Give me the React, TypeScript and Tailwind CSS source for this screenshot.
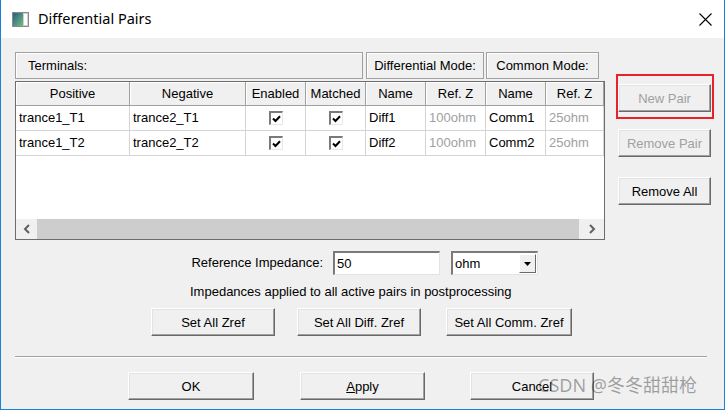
import React from "react";

const font = { fontFamily: '"Liberation Sans", Arial, sans-serif' };

const btnCls =
  "flex items-center justify-center bg-[#f0f0f0] border border-t-white border-l-white border-r-[#696969] border-b-[#696969] shadow-[inset_-1px_-1px_0_#a0a0a0,inset_1px_1px_0_#e3e3e3] text-[13px] leading-none";

const cols = [
  { key: "pos", label: "Positive", w: "w-[114px]" },
  { key: "neg", label: "Negative", w: "w-[116px]" },
  { key: "en", label: "Enabled", w: "w-[60px]" },
  { key: "ma", label: "Matched", w: "w-[60px]" },
  { key: "dn", label: "Name", w: "w-[60px]" },
  { key: "dz", label: "Ref. Z", w: "w-[60px]" },
  { key: "cn", label: "Name", w: "w-[60px]" },
  { key: "cz", label: "Ref. Z", w: "w-[58px]" },
];

const rows = [
  { pos: "trance1_T1", neg: "trance2_T1", dn: "Diff1", dz: "100ohm", cn: "Comm1", cz: "25ohm" },
  { pos: "trance1_T2", neg: "trance2_T2", dn: "Diff2", dz: "100ohm", cn: "Comm2", cz: "25ohm" },
];

const CheckBox = () => (
  <div className="w-[14px] h-[14px] bg-white border-t-2 border-l-2 border-[#7a7a7a] border-r border-b border-r-[#e8e8e8] border-b-[#e8e8e8] flex items-center justify-center">
    <svg width="9" height="8" viewBox="0 0 9 8">
      <path d="M1 3.5 L3.5 6 L8 1.2" fill="none" stroke="#000" strokeWidth="2" />
    </svg>
  </div>
);

const Btn = ({ label, w, disabled, children }: { label?: string; w: string; disabled?: boolean; children?: React.ReactNode }) => (
  <div className={`${btnCls} ${w} h-[28px] ${disabled ? "text-[#a0a0a0]" : "text-black"}`}>
    {children ?? label}
  </div>
);

const Grid = () => (
  <div className="w-[590px] h-[159px] mt-[2px] border border-[#6d6d6d] bg-white flex flex-col overflow-hidden">
    <div className="flex h-[24px] bg-[#f0f0f0]">
      {cols.map((c) => (
        <div
          key={c.key}
          className={`${c.w} shrink-0 flex items-center justify-center border-r border-b border-[#a0a0a0] shadow-[inset_1px_1px_0_#fff] text-[13px]`}
        >
          {c.label}
        </div>
      ))}
    </div>
    {rows.map((r, i) => (
      <div key={i} className="flex h-[25px]">
        {cols.map((c) => {
          const isCheck = c.key === "en" || c.key === "ma";
          const gray = c.key === "dz" || c.key === "cz";
          return (
            <div
              key={c.key}
              className={`${c.w} shrink-0 flex items-center border-r border-b border-[#d4d4d4] text-[13px] ${
                isCheck ? "justify-center" : "pl-[3px]"
              } ${gray ? "text-[#a0a0a0]" : "text-black"}`}
            >
              {isCheck ? <CheckBox /> : (r as any)[c.key]}
            </div>
          );
        })}
      </div>
    ))}
    <div className="flex-1" />
    <div className="flex h-[20px]">
      <div className="w-[21px] bg-[#f0f0f0] flex items-center justify-center">
        <svg width="8" height="10" viewBox="0 0 8 10">
          <path d="M6 1 L2 5 L6 9" fill="none" stroke="#606060" strokeWidth="2" />
        </svg>
      </div>
      <div className="flex-1 bg-[#cdcdcd]" />
      <div className="w-[25px] bg-[#f0f0f0] flex items-center justify-center">
        <svg width="8" height="10" viewBox="0 0 8 10">
          <path d="M2 1 L6 5 L2 9" fill="none" stroke="#606060" strokeWidth="2" />
        </svg>
      </div>
    </div>
  </div>
);

const HeadBox = ({ w, label, pl }: { w: string; label: string; pl?: string }) => (
  <div
    className={`${w} h-[27px] flex items-center ${pl ?? "justify-center"} bg-[#f0f0f0] border border-[#a0a0a0] shadow-[inset_1px_1px_0_#fff] text-[13px]`}
  >
    {label}
  </div>
);

export default function App() {
  return (
    <div className="w-[725px] h-[410px] bg-white relative">
      <div
        className="w-full h-full flex flex-col border-l border-r border-b border-[#1883d7] text-black"
        style={font}
      >
        {/* title bar */}
        <div className="h-[38px] bg-white flex items-center shrink-0">
          <svg width="17" height="15" viewBox="0 0 17 15" className="ml-[11px] mt-[1px]">
            <defs>
              <linearGradient id="ic" x1="0" y1="0" x2="1" y2="1">
                <stop offset="0" stopColor="#2a5d86" />
                <stop offset="1" stopColor="#6fbf7d" />
              </linearGradient>
            </defs>
            <rect x="0.5" y="0.5" width="16" height="14" fill="#d0d0d0" stroke="#8a8a8a" />
            <rect x="1" y="1" width="10" height="13" fill="url(#ic)" />
            <rect x="12" y="2" width="3" height="11" fill="#fff" />
          </svg>
          <span
            className="ml-[9px] text-[14.5px] text-black"
            style={{ fontFamily: '"Noto Sans", "Open Sans", sans-serif' }}
          >
            Differential Pairs
          </span>
          <div className="flex-1" />
          <svg width="13" height="13" viewBox="0 0 13 13" className="mr-[12px]">
            <path d="M0.5 0.5 L12.5 12.5 M12.5 0.5 L0.5 12.5" stroke="#000" strokeWidth="1.1" />
          </svg>
        </div>

        {/* body */}
        <div className="flex-1 bg-[#f0f0f0] pl-[14px] pt-[14px] flex flex-col">
          <div className="flex">
            <div className="flex flex-col w-[590px]">
              <div className="flex">
                <HeadBox w="w-[348px]" label="Terminals:" pl="pl-[12px]" />
                <div className="w-[3px]" />
                <HeadBox w="w-[118px]" label="Differential Mode:" />
                <div className="w-[2px]" />
                <HeadBox w="w-[113px]" label="Common Mode:" />
              </div>
              <Grid />
            </div>
            <div className="flex flex-col ml-[13px] pt-[32px]">
              <div className="relative">
                <Btn label="New Pair" w="w-[93px]" disabled />
                <div className="absolute left-[-2px] top-[-10px] w-[98px] h-[45px] border-2 border-[#e8212b]" />
              </div>
              <div className="h-[17px]" />
              <Btn label="Remove Pair" w="w-[93px]" disabled />
              <div className="h-[20px]" />
              <Btn label="Remove All" w="w-[93px]" />
            </div>
          </div>

          {/* reference impedance */}
          <div className="flex items-center h-[24px] mt-[11px]">
            <div className="w-[308px] text-right text-[13px]">Reference Impedance:</div>
            <div className="ml-[10px] w-[107px] h-[24px] bg-white border-t-2 border-l-2 border-[#7a7a7a] border-r border-b border-r-[#e3e3e3] border-b-[#e3e3e3] flex items-center pl-[2px] text-[13px]">
              50
            </div>
            <div className="ml-[11px] w-[87px] h-[24px] bg-white border-t-2 border-l-2 border-[#7a7a7a] border-r border-b border-r-[#e3e3e3] border-b-[#e3e3e3] flex items-center text-[13px]">
              <span className="pl-[2px] flex-1">ohm</span>
              <div className="w-[17px] h-[19px] mr-[1px] bg-[#f0f0f0] border border-t-white border-l-white border-r-[#696969] border-b-[#696969] flex items-center justify-center">
                <svg width="7" height="4" viewBox="0 0 7 4">
                  <path d="M0 0 L7 0 L3.5 4 Z" fill="#000" />
                </svg>
              </div>
            </div>
          </div>

          <div className="h-[16px] mt-[9px] pl-[175px] flex items-center text-[13px]">
            Impedances applied to all active pairs in postprocessing
          </div>

          <div className="flex mt-[8px] pl-[136px]">
            <Btn label="Set All Zref" w="w-[124px]" />
            <div className="w-[22px]" />
            <Btn label="Set All Diff. Zref" w="w-[124px]" />
            <div className="w-[25px]" />
            <Btn label="Set All Comm. Zref" w="w-[126px]" />
          </div>

          <div className="mt-[20px] w-[692px] border-t border-b border-t-[#a0a0a0] border-b-white" />

          <div className="flex mt-[14px] pl-[113px]">
            <Btn label="OK" w="w-[126px]" />
            <div className="w-[46px]" />
            <Btn w="w-[125px]">
              <span>
                <span className="underline">A</span>pply
              </span>
            </Btn>
            <div className="w-[45px]" />
            <Btn label="Cancel" w="w-[124px]" />
          </div>
        </div>
      </div>

      <div
        className="absolute left-[538px] top-[376px] text-[18px] text-black/35 leading-none whitespace-nowrap"
        style={{ fontFamily: '"Noto Sans", "Noto Sans CJK SC", sans-serif' }}
      >
        CSDN @冬冬甜甜枪
      </div>
    </div>
  );
}
